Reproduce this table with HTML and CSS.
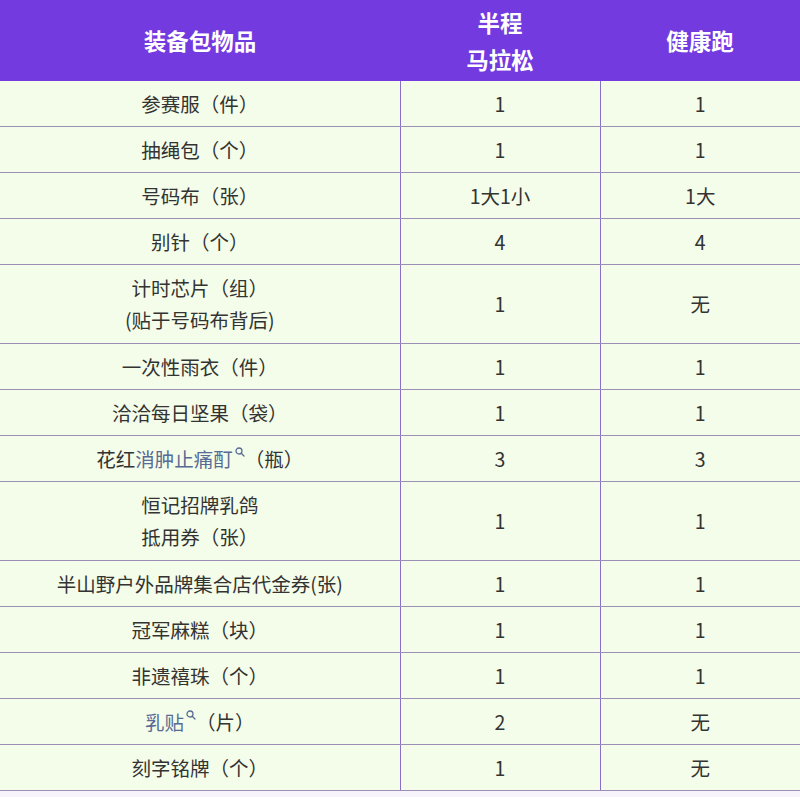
FILE: index.html
```html
<!DOCTYPE html>
<html lang="zh">
<head>
<meta charset="utf-8">
<link rel="stylesheet" href="styles.css">
</head>
<body>
<table class="kit">
  <colgroup><col class="c1"><col class="c2"><col class="c3"></colgroup>
  <thead>
    <tr class="head">
      <th>装备包物品</th>
      <th>半程<br>马拉松</th>
      <th>健康跑</th>
    </tr>
  </thead>
  <tbody>
    <tr><td>参赛服（件）</td><td>1</td><td>1</td></tr>
    <tr><td>抽绳包（个）</td><td>1</td><td>1</td></tr>
    <tr><td>号码布（张）</td><td>1大1小</td><td>1大</td></tr>
    <tr><td>别针（个）</td><td>4</td><td>4</td></tr>
    <tr class="tall"><td>计时芯片（组）<br>(贴于号码布背后)</td><td>1</td><td>无</td></tr>
    <tr><td>一次性雨衣（件）</td><td>1</td><td>1</td></tr>
    <tr><td>洽洽每日坚果（袋）</td><td>1</td><td>1</td></tr>
    <tr><td>花红<span class="link">消肿止痛酊<svg class="sicon" viewBox="0 0 10 10" width="10" height="10"><circle cx="4" cy="4" r="3" fill="none" stroke="#576b95" stroke-width="1.3"/><line x1="6.2" y1="6.2" x2="9" y2="9" stroke="#576b95" stroke-width="1.3" stroke-linecap="round"/></svg></span>（瓶）</td><td>3</td><td>3</td></tr>
    <tr class="tall"><td>恒记招牌乳鸽<br>抵用券（张）</td><td>1</td><td>1</td></tr>
    <tr><td>半山野户外品牌集合店代金券(张)</td><td>1</td><td>1</td></tr>
    <tr><td>冠军麻糕（块）</td><td>1</td><td>1</td></tr>
    <tr><td>非遗禧珠（个）</td><td>1</td><td>1</td></tr>
    <tr><td><span class="link">乳贴<svg class="sicon" viewBox="0 0 10 10" width="10" height="10"><circle cx="4" cy="4" r="3" fill="none" stroke="#576b95" stroke-width="1.3"/><line x1="6.2" y1="6.2" x2="9" y2="9" stroke="#576b95" stroke-width="1.3" stroke-linecap="round"/></svg></span>（片）</td><td>2</td><td>无</td></tr>
    <tr><td>刻字铭牌（个）</td><td>1</td><td>无</td></tr>
  </tbody>
</table>
</body>
</html>
```
FILE: styles.css
```css
html, body {
  margin: 0;
  padding: 0;
  background: #f7f4fc;
}
body {
  font-family: "Noto Sans CJK SC", "Noto Sans", sans-serif;
}
.kit {
  width: 800px;
  border-collapse: collapse;
  table-layout: fixed;
  background: #f4fde9;
}
.c1 { width: 400px; }
.c2 { width: 200px; }
.c3 { width: 200px; }
.head th {
  background: #733ae0;
  color: #ffffff;
  font-size: 22.5px;
  font-weight: 700;
  line-height: 37px;
  height: 81px;
  padding: 0;
  text-align: center;
  vertical-align: middle;
}
.kit td {
  height: 45px;
  padding: 0;
  text-align: center;
  vertical-align: middle;
  font-size: 19.5px;
  color: #333333;
  line-height: 32px;
  border-bottom: 1.5px solid #9c8fb6;
  border-left: 1.5px solid #8a70cc;
}
.kit td:first-child { border-left: none; }
.kit tr.tall td { height: 78px; }
.link { color: #576b95; }
.sicon {
  vertical-align: 10px;
  margin-left: 2px;
}
```
